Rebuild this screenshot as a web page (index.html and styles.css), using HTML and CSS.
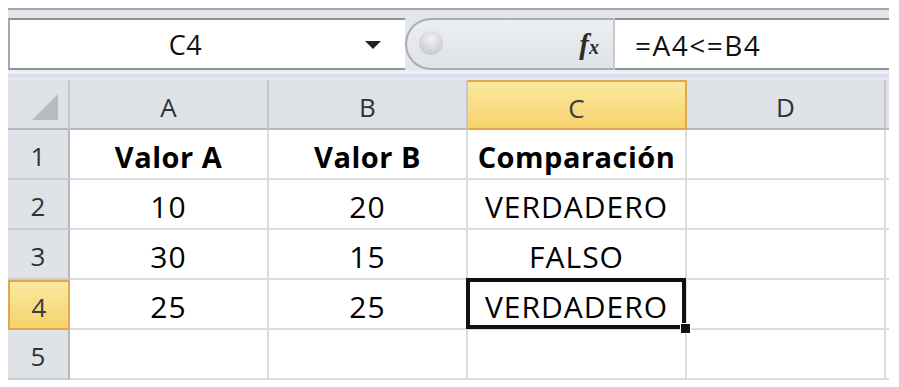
FILE: index.html
```html
<!DOCTYPE html>
<html lang="es">
<head>
    <meta charset="UTF-8">
    <title>Hoja de cálculo</title>
    <link rel="stylesheet" href="styles.css">
</head>
<body>
    <div class="window">
        <div class="formula-bar">
            <div class="name-box">
                <span class="cell-ref">C4</span>
                <span class="arrow"></span>
            </div>
            <div class="fx-area">
                <span class="knob"></span>
                <span class="fx"><i>f</i><b>x</b></span>
            </div>
            <div class="formula">=A4&lt;=B4</div>
        </div>
        <div class="bar-gap"></div>

        <div class="sheet">
            <div class="hd corner"><span class="tri"></span></div>
            <div class="hd">A</div>
            <div class="hd">B</div>
            <div class="hd sel">C</div>
            <div class="hd">D</div>
            <div class="hd"></div>

            <div class="hd row">1</div>
            <div class="cell bold">Valor A</div>
            <div class="cell bold">Valor B</div>
            <div class="cell bold">Comparación</div>
            <div class="cell"></div>
            <div class="cell"></div>

            <div class="hd row">2</div>
            <div class="cell">10</div>
            <div class="cell">20</div>
            <div class="cell">VERDADERO</div>
            <div class="cell"></div>
            <div class="cell"></div>

            <div class="hd row">3</div>
            <div class="cell">30</div>
            <div class="cell">15</div>
            <div class="cell">FALSO</div>
            <div class="cell"></div>
            <div class="cell"></div>

            <div class="hd row sel">4</div>
            <div class="cell">25</div>
            <div class="cell">25</div>
            <div class="cell active">VERDADERO<span class="handle"></span></div>
            <div class="cell"></div>
            <div class="cell"></div>

            <div class="hd row">5</div>
            <div class="cell"></div>
            <div class="cell"></div>
            <div class="cell"></div>
            <div class="cell"></div>
            <div class="cell"></div>
        </div>
    </div>
</body>
</html>
```

FILE: styles.css
```css
* {
    margin: 0;
    padding: 0;
    box-sizing: border-box;
}

body {
    background-color: white;
    font-family: "Open Sans", "Noto Sans", sans-serif;
    padding: 8px 10px 0 8px;
}

.window {
    width: 881px;
    overflow: hidden;
}

/* formula bar */
.formula-bar {
    display: flex;
    height: 62px;
    border-top: 2px solid #a4a7ab;
    background-color: #e3e6ea;
    padding-top: 8px;
}

.name-box {
    display: flex;
    align-items: center;
    width: 397px;
    height: 52px;
    background-color: white;
    border-top: 2px solid #8e9196;
    border-bottom: 2px solid #8e9196;
    border-left: 2px solid #a4a7ab;
}

.cell-ref {
    flex: 1;
    text-align: center;
    font-size: 27px;
    letter-spacing: 0.5px;
    color: #111;
    padding-right: 4px;
}

.arrow {
    width: 0;
    height: 0;
    border-left: 8px solid transparent;
    border-right: 8px solid transparent;
    border-top: 8px solid #222;
    margin-right: 24px;
    margin-top: 2px;
}

.fx-area {
    display: flex;
    align-items: center;
    justify-content: space-between;
    width: 210px;
    height: 52px;
    background: linear-gradient(#eceef1, #dfe2e6);
    border: 2px solid #a9acb1;
    border-right: 2px solid #c4c7cc;
    border-radius: 26px 0 0 26px;
    padding: 0 14px 0 12px;
}

.knob {
    width: 24px;
    height: 24px;
    border-radius: 50%;
    background: radial-gradient(circle at 50% 35%, #f4f4f4, #b3b5b8);
    opacity: 0.8;
    margin-bottom: 2px;
}

.fx {
    font-family: "Liberation Serif", "DejaVu Serif", serif;
    color: #2b2b2b;
    font-size: 29px;
    line-height: 1;
}

.fx i {
    font-weight: bold;
}

.fx b {
    font-size: 20px;
    font-style: italic;
}

.formula {
    flex: 1;
    height: 52px;
    background-color: white;
    border-top: 2px solid #8e9196;
    border-bottom: 2px solid #8e9196;
    font-size: 28px;
    letter-spacing: 1.5px;
    color: #111;
    padding: 6px 0 0 20px;
}

.bar-gap {
    height: 10px;
    background: linear-gradient(#eceef2 0, #eceef2 40%, #d8def0 40%, #d8def0 70%, #e6e8ec 70%);
}

/* grid */
.sheet {
    display: grid;
    grid-template-columns: 62px 199px 199px 219px 199px 30px;
    grid-auto-rows: 50px;
}

.hd {
    display: flex;
    align-items: center;
    justify-content: center;
    background-color: #dfe3e8;
    border-right: 2px solid #c3c7cd;
    border-bottom: 2px solid #b5b9bf;
    color: #2f3237;
    font-size: 26px;
    padding-top: 6px;
}

.hd.row {
    border-right: 2px solid #b5b9bf;
    border-bottom: 2px solid #c9cdd2;
    padding-top: 4px;
}

.hd.sel {
    background: linear-gradient(#fbe89f, #f6d36c);
    border: 2px solid #e0a84c;
    border-left: 0;
    color: #3b3b3b;
}

.hd.row.sel {
    border: 2px solid #e0a84c;
}

.corner {
    position: relative;
}

.tri {
    position: absolute;
    right: 10px;
    bottom: 8px;
    width: 0;
    height: 0;
    border-left: 26px solid transparent;
    border-bottom: 26px solid #b9bdc3;
}

.cell {
    display: flex;
    align-items: center;
    justify-content: center;
    border-right: 2px solid #dadcdf;
    border-bottom: 2px solid #dadcdf;
    font-size: 30px;
    letter-spacing: 1px;
    color: #000;
    padding-top: 5px;
}

.bold {
    font-weight: bold;
    font-size: 29px;
    letter-spacing: 0.5px;
}

.active {
    position: relative;
}

.active::before {
    content: "";
    position: absolute;
    top: -2px;
    left: -2px;
    right: -1px;
    bottom: -1px;
    border: 4px solid #111;
}

.handle {
    position: absolute;
    right: -6px;
    bottom: -6px;
    width: 11px;
    height: 11px;
    background-color: #111;
    border: 1px solid white;
}
```
